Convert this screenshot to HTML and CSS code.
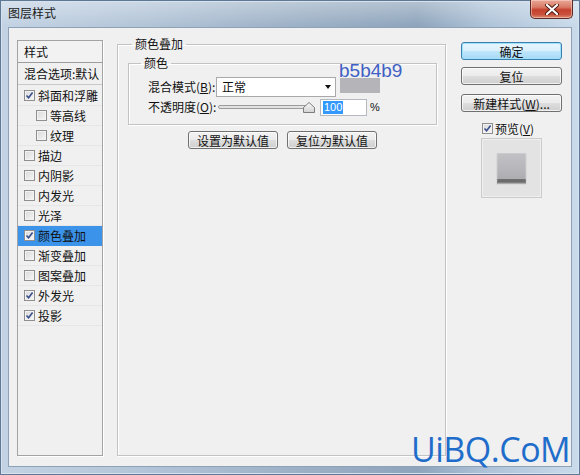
FILE: index.html
```html
<!DOCTYPE html>
<html lang="zh-CN">
<head>
<meta charset="utf-8">
<title>图层样式</title>
<link rel="stylesheet" href="styles.css">
</head>
<body>
<div class="window">
  <div class="titlebar">
    <span class="title">图层样式</span>
    <div class="close">
      <svg width="14" height="11" viewBox="0 0 14 11"><path d="M2 1 L12 10 M12 1 L2 10" stroke="#4a1810" stroke-width="4" stroke-linecap="round"/><path d="M2 1 L12 10 M12 1 L2 10" stroke="#ffffff" stroke-width="2.2" stroke-linecap="round"/></svg>
    </div>
  </div>
  <div class="client">
    <div class="styles-list">
      <div class="list-head">样式</div>
      <div class="list-blend">混合选项:默认</div>
      <div class="items">
        <div class="item"><span class="cb"><svg viewBox="0 0 9 9"><path d="M1.5 4.5 L3.6 6.8 L7.6 1.6" fill="none" stroke="#394e8c" stroke-width="1.6"/></svg></span>斜面和浮雕</div>
        <div class="item sub"><span class="cb"></span>等高线</div>
        <div class="item sub"><span class="cb"></span>纹理</div>
        <div class="item"><span class="cb"></span>描边</div>
        <div class="item"><span class="cb"></span>内阴影</div>
        <div class="item"><span class="cb"></span>内发光</div>
        <div class="item"><span class="cb"></span>光泽</div>
        <div class="item selected"><span class="cb"><svg viewBox="0 0 9 9"><path d="M1.5 4.5 L3.6 6.8 L7.6 1.6" fill="none" stroke="#394e8c" stroke-width="1.6"/></svg></span>颜色叠加</div>
        <div class="item"><span class="cb"></span>渐变叠加</div>
        <div class="item"><span class="cb"></span>图案叠加</div>
        <div class="item"><span class="cb"><svg viewBox="0 0 9 9"><path d="M1.5 4.5 L3.6 6.8 L7.6 1.6" fill="none" stroke="#394e8c" stroke-width="1.6"/></svg></span>外发光</div>
        <div class="item"><span class="cb"><svg viewBox="0 0 9 9"><path d="M1.5 4.5 L3.6 6.8 L7.6 1.6" fill="none" stroke="#394e8c" stroke-width="1.6"/></svg></span>投影</div>
      </div>
    </div>

    <fieldset class="group outer">
      <legend>颜色叠加</legend>
      <fieldset class="group inner">
        <legend>颜色</legend>
        <div class="row">
          <span class="label">混合模式(<u>B</u>):</span>
          <div class="select"><span>正常</span><span class="arrow"></span></div>
          <div class="swatch"></div>
        </div>
        <div class="row row2">
          <span class="label">不透明度(<u>O</u>):</span>
          <div class="slider">
            <div class="track"></div>
            <svg class="thumb" width="12" height="11" viewBox="0 0 12 11"><defs><linearGradient id="tg" x1="0" y1="0" x2="0" y2="1"><stop offset="0" stop-color="#fafafa"/><stop offset="1" stop-color="#d2d2d2"/></linearGradient></defs><path d="M6 0.5 L11.5 5.5 L11.5 10.5 L0.5 10.5 L0.5 5.5 Z" fill="url(#tg)" stroke="#7d7d7d"/></svg>
          </div>
          <div class="textbox"><span class="sel">100</span></div>
          <span class="pct">%</span>
        </div>
        <span class="hex">b5b4b9</span>
      </fieldset>
      <div class="btn-row">
        <button class="btn wide">设置为默认值</button>
        <button class="btn wide">复位为默认值</button>
      </div>
    </fieldset>

    <div class="side">
      <button class="btn default">确定</button>
      <button class="btn reset">复位</button>
      <button class="btn newstyle">新建样式(<u>W</u>)...</button>
      <div class="preview-check"><span class="cb"><svg viewBox="0 0 9 9"><path d="M1.5 4.5 L3.6 6.8 L7.6 1.6" fill="none" stroke="#394e8c" stroke-width="1.6"/></svg></span>预览(<u>V</u>)</div>
      <div class="preview"><div class="preview-square"></div></div>
    </div>
  </div>
  <div class="watermark">UiBQ.CoM</div>
</div>
</body>
</html>
```

FILE: styles.css
```css
* { box-sizing: border-box; }
html, body { margin: 0; padding: 0; }
body {
  width: 580px;
  height: 475px;
  overflow: hidden;
  font-family: "Noto Sans CJK SC", "Liberation Sans", sans-serif;
  font-size: 12px;
  color: #111;
}
.window {
  position: relative;
  width: 580px;
  height: 475px;
  display: flex;
  flex-direction: column;
  background:
    linear-gradient(180deg, rgba(255,255,255,0.35) 0px, rgba(255,255,255,0) 26px),
    linear-gradient(90deg, #c3d3e4 0%, #b2c4d7 25%, #9db1c6 50%, #8ea4bb 72%, #aec3d8 84%, #cadbeb 100%);
  box-shadow: inset 0 0 0 1px #5f7893, inset 0 0 0 2px #d6e2ee;
}
.titlebar {
  height: 27px;
  display: flex;
  justify-content: space-between;
  align-items: flex-start;
}
.title {
  margin: 5px 0 0 8px;
  line-height: 16px;
  font-size: 12px;
  color: #1a1a1a;
}
.close {
  width: 43px;
  height: 19px;
  margin-right: 7px;
  border: 1px solid #5a2c25;
  border-top: none;
  border-radius: 0 0 5px 5px;
  background: linear-gradient(180deg, #e9a898 0%, #d87a66 40%, #c4412c 55%, #c9513c 80%, #dc8a70 100%);
  box-shadow: inset 0 0 0 1px rgba(255,220,210,0.5);
  display: flex;
  align-items: center;
  justify-content: center;
}
.client {
  flex: 1;
  margin: 0 8px 8px 8px;
  border: 1px solid #8ea2b7;
  background: #f0f0f0;
  display: flex;
  align-items: stretch;
  padding: 12px 0 10px 8px;
}

/* left list */
.styles-list {
  width: 86px;
  border: 1px solid #a3a3a3;
  box-shadow: 1px 1px 0 #ffffff;
  background: #f0f0f0;
  display: flex;
  flex-direction: column;
  overflow: hidden;
}
.list-head {
  height: 22px;
  line-height: 21px;
  padding-left: 6px;
  border-bottom: 1px solid #9d9d9d;
  background: #f2f2f2;
}
.list-blend {
  height: 22px;
  line-height: 21px;
  padding-left: 6px;
  white-space: nowrap;
  border-bottom: 1px solid #c9c9c9;
}
.items { padding-top: 1px; }
.item {
  height: 20px;
  display: flex;
  align-items: center;
  padding-left: 6px;
  white-space: nowrap;
  border-bottom: 1px solid #e6e6e6;
}
.item.sub { padding-left: 18px; }
.item.selected { background: #3b93ea; border-bottom-color: #3b93ea; }
.cb {
  width: 11px;
  height: 11px;
  flex-shrink: 0;
  margin-right: 3px;
  border: 1px solid #8f8f8f;
  background: linear-gradient(135deg, #d9d9d9 0%, #f6f6f6 100%);
  box-shadow: inset 0 0 0 1px #f3f3f3;
  display: inline-flex;
  align-items: center;
  justify-content: center;
}
.cb svg { width: 9px; height: 9px; }

/* group boxes */
.group {
  margin: 0;
  border: 1px solid #c3c3c3;
  box-shadow: inset 1px 1px 0 #ffffff, 1px 1px 0 #ffffff;
}
.group legend {
  padding: 0 3px;
  line-height: 16px;
  font-size: 12px;
}
.outer {
  width: 329px;
  margin-left: 14px;
  margin-top: -4px;
  padding: 3px 8px 0 10px;
}
.outer > legend { margin-left: 4px; }
.inner {
  position: relative;
  padding: 6px 8px 8px 9px;
}
.inner > legend { margin-left: 3px; }
.row {
  display: flex;
  align-items: flex-start;
  height: 20px;
  padding-left: 10px;
}
.row2 { height: 18px; margin-top: 1px; align-items: center; }
.label {
  width: 68px;
  line-height: 20px;
  white-space: nowrap;
}
.row2 .label { line-height: 18px; }
.select {
  width: 120px;
  height: 20px;
  border: 1px solid #a9a9a9;
  background: #ffffff;
  display: flex;
  align-items: center;
  justify-content: space-between;
  padding: 0 4px 0 5px;
  line-height: 18px;
}
.arrow {
  width: 0;
  height: 0;
  border-left: 3px solid transparent;
  border-right: 3px solid transparent;
  border-top: 4px solid #111;
}
.swatch {
  width: 40px;
  height: 15px;
  margin: 1px 0 0 4px;
  background: #b5b4b9;
}
.slider {
  width: 97px;
  height: 12px;
  margin-left: 2px;
  display: flex;
  align-items: center;
}
.track {
  width: 90px;
  height: 4px;
  border: 1px solid #9c9c9c;
  border-radius: 2px;
  background: #e2e2e2;
}
.thumb { margin-left: -5px; flex-shrink: 0; }
.textbox {
  width: 47px;
  height: 17px;
  margin-left: 5px;
  border: 1px solid #b5b8be;
  background: #ffffff;
  padding: 1px 0 0 2px;
  font-family: "Liberation Sans", sans-serif;
  font-size: 11px;
}
.sel {
  display: inline-block;
  background: #3399ff;
  color: #ffffff;
  line-height: 13px;
  padding: 0 1px;
}
.pct {
  margin-left: 3px;
  font-family: "Liberation Sans", sans-serif;
  font-size: 11px;
}
.hex {
  position: absolute;
  left: 210px;
  top: -10px;
  font-family: "Liberation Sans", sans-serif;
  font-size: 19px;
  line-height: 20px;
  color: #3f60c4;
}

/* buttons */
.btn {
  height: 18px;
  padding: 0;
  border: 1px solid #707070;
  border-radius: 3px;
  background: linear-gradient(180deg, #f3f3f3 0%, #ebebeb 48%, #dddddd 52%, #cfcfcf 100%);
  box-shadow: inset 0 0 0 1px rgba(255,255,255,0.7);
  font-family: "Noto Sans CJK SC", sans-serif;
  font-size: 12px;
  line-height: 15px;
  color: #111;
}
.btn-row {
  display: flex;
  justify-content: center;
  gap: 9px;
  margin-top: 6px;
}
.btn.wide { width: 90px; }
.side {
  width: 101px;
  margin-left: 15px;
  display: flex;
  flex-direction: column;
  align-items: flex-start;
}
.side .btn { width: 101px; }
.btn.default {
  margin-top: 2px;
  border-color: #3c7fb1;
  background: linear-gradient(180deg, #e9f6fd 0%, #d9f0fc 48%, #bee6fd 52%, #a7d9f5 100%);
  box-shadow: inset 0 0 0 1px #9ee1fb;
}
.btn.reset { margin-top: 7px; }
.btn.newstyle { margin-top: 9px; }
.preview-check {
  margin: 8px 0 0 21px;
  height: 16px;
  display: flex;
  align-items: center;
  white-space: nowrap;
}
.preview-check .cb { margin-right: 2px; }
.preview {
  width: 61px;
  height: 60px;
  margin: 2px 0 0 20px;
  border: 1px solid #cbcbcb;
  background: #e3e3e3;
  box-shadow: inset 0 0 0 1px #efefef;
  display: flex;
  align-items: center;
  justify-content: center;
}
.preview-square {
  width: 29px;
  height: 30px;
  background: linear-gradient(180deg, #c2c1c6 0%, #b5b4b9 60%, #adacb1 86%, #6f6f6f 87%, #6a6a6a 100%);
  box-shadow: 0 1px 1px rgba(0,0,0,0.25), inset 0 0 0 1px rgba(255,255,255,0.15);
}
.watermark {
  position: absolute;
  left: 411px;
  top: 432px;
  font-family: "Open Sans", "Liberation Sans", sans-serif;
  font-size: 34px;
  line-height: 34px;
  letter-spacing: -0.5px;
  color: #1f6dcb;
}
```
